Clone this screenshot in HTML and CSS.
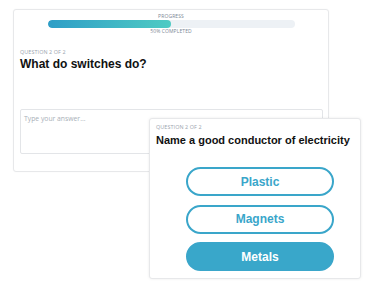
FILE: index.html
```html
<!DOCTYPE html>
<html>
<head>
<meta charset="utf-8">
<link rel="stylesheet" href="styles.css">
</head>
<body>
<div class="stage">
  <div class="card card-main">
    <div class="progress">
      <span class="tiny">PROGRESS</span>
      <div class="track"><div class="fill" style="width:50%"></div></div>
      <span class="tiny">50% COMPLETED</span>
    </div>
    <span class="tiny qlabel">QUESTION 2 OF 2</span>
    <h1 class="title">What do switches do?</h1>
    <div class="answer">Type your answer...</div>
  </div>
  <div class="card card-quiz">
    <span class="tiny qlabel">QUESTION 2 OF 2</span>
    <h2 class="title2">Name a good conductor of electricity</h2>
    <div class="options">
      <div class="opt">Plastic</div>
      <div class="opt">Magnets</div>
      <div class="opt opt-active">Metals</div>
    </div>
  </div>
</div>
</body>
</html>
```
FILE: styles.css
```css
* { box-sizing: border-box; }
html, body { margin: 0; padding: 0; background: #fff; }
body { width: 373px; height: 289px; overflow: hidden; font-family: "Liberation Sans", Arial, sans-serif; }
.stage { position: relative; width: 373px; height: 289px; }
.card { background: #fff; border: 1px solid #e7e8ea; border-radius: 3px; }
.card-main {
  position: absolute; left: 13px; top: 9px; width: 316px; height: 163px;
  padding: 3px 5px 0 6px;
  box-shadow: 0 0 2px rgba(0,0,0,0.04);
}
.tiny {
  display: block;
  font-family: "Open Sans", sans-serif;
  font-size: 5px; line-height: 6px; color: #7d8896; letter-spacing: 0.1px;
}
.progress { display: flex; flex-direction: column; align-items: center; margin-left: -6px; margin-right: -5px; }
.track {
  width: 247px; height: 8px; margin-top: 1px; border-radius: 4px;
  background: #edf1f5; overflow: hidden;
}
.fill { height: 100%; border-radius: 4px; background: linear-gradient(90deg, #2e9ec7, #4fcbc3); }
.card-main .qlabel { margin-top: 15px; font-size: 5.4px; color: #9aa3ae; }
.title { margin: 2px 0 0; font-size: 12px; line-height: 14px; font-weight: bold; color: #111; }
.answer {
  margin-top: 38px; height: 45px; border: 1px solid #e3e5e8; border-radius: 2px;
  padding: 5px 3px; font-family: "Open Sans", sans-serif; font-size: 6.8px; line-height: 8px; color: #a9b0b8;
}
.card-quiz {
  position: absolute; left: 149px; top: 118px; width: 212px; height: 161px;
  padding: 5px 6px 0 6px;
  box-shadow: 0 0 3px rgba(0,0,0,0.08);
}
.card-quiz .qlabel { font-size: 5.4px; color: #9aa3ae; }
.title2 { margin: 4px 0 0; font-size: 11px; line-height: 13px; font-weight: bold; color: #111; }
.options { display: flex; flex-direction: column; gap: 8.7px; margin-top: 20px; margin-left: 30px; width: 148px; }
.opt {
  height: 29px; border: 2px solid #3aa6ca; border-radius: 15px;
  display: flex; align-items: center; justify-content: center;
  font-size: 12px; font-weight: bold; color: #3aa6ca; background: #fff;
}
.opt-active { background: #39a7ca; color: #fff; }
```
